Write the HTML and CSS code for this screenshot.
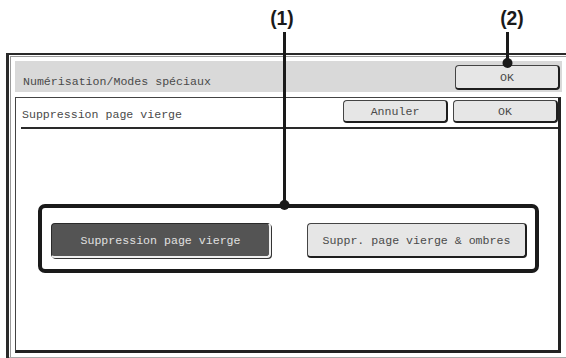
FILE: index.html
```html
<!DOCTYPE html>
<html lang="fr">
<head>
<meta charset="utf-8">
<link rel="stylesheet" href="styles.css">
</head>
<body>
<div class="page">
  <div class="annot">
    <span class="label label-1">(1)</span>
    <span class="label label-2">(2)</span>
  </div>
  <div class="window">
    <div class="header">
      <span class="title">Numérisation/Modes spéciaux</span>
      <button class="btn btn-header">OK</button>
    </div>
    <div class="panel">
      <div class="panel-head">
        <span class="title">Suppression page vierge</span>
        <div class="actions">
          <button class="btn btn-small">Annuler</button>
          <button class="btn btn-small">OK</button>
        </div>
      </div>
      <div class="group">
        <button class="btn btn-option active">Suppression page vierge</button>
        <button class="btn btn-option">Suppr. page vierge &amp; ombres</button>
      </div>
    </div>
  </div>
  <svg class="leaders" width="566" height="358" viewBox="0 0 566 358">
    <line x1="284.5" y1="32" x2="284.5" y2="205" stroke="#1a1a1a" stroke-width="3"/>
    <circle cx="284.5" cy="205" r="5" fill="#1a1a1a"/>
    <line x1="507.5" y1="32" x2="507.5" y2="63" stroke="#1a1a1a" stroke-width="3"/>
    <circle cx="507.5" cy="63" r="5" fill="#1a1a1a"/>
  </svg>
</div>
</body>
</html>
```

FILE: styles.css
```css
* { box-sizing: border-box; }
html, body { margin: 0; padding: 0; background: #fff; }
.page {
  position: relative;
  width: 566px;
  height: 358px;
  overflow: hidden;
  font-family: "Liberation Mono", "Courier New", monospace;
  color: #444;
}
.annot { position: relative; height: 53px; }
.label {
  position: absolute;
  top: 5px;
  font-family: "Liberation Sans", Arial, sans-serif;
  font-weight: bold;
  font-size: 21px;
  line-height: 25px;
  color: #1a1a1a;
  transform: translateX(-50%) scaleX(0.92);
}
.label-1 { left: 282px; }
.label-2 { left: 512px; }

.window {
  position: relative;
  margin-left: 6px;
  height: 305px;
  border-top: 2px solid #2a2a2a;
  border-left: 3px solid #2a2a2a;
  padding: 6px 4px 0 6px;
  display: flex;
  flex-direction: column;
}
.window::before {
  content: "";
  position: absolute;
  left: 1px; top: 1px; right: 0; bottom: 0;
  border-left: 1px solid #9a9a9a;
  border-top: 1px solid #9a9a9a;
  pointer-events: none;
}
.window::after {
  content: "";
  position: absolute;
  left: 0; right: 0; bottom: 0;
  border-bottom: 1px solid #aaa;
}
.header {
  height: 31px;
  background: #d9d9d9;
  display: flex;
  align-items: center;
  justify-content: space-between;
  padding-left: 8px;
  padding-right: 2px;
}
.title {
  font-size: 11.6px;
  color: #4a4a4a;
}
.header .title { margin-top: 9px; }
.btn {
  font-family: "Liberation Mono", "Courier New", monospace;
  font-size: 11.6px;
  color: #4a4a4a;
  background: #e6e6e6;
  border: 1px solid #444;
  border-right: 2px solid #1e1e1e;
  border-bottom: 2px solid #1e1e1e;
  border-radius: 4px;
  padding: 0;
  margin: 0;
  display: flex;
  align-items: center;
  justify-content: center;
}
.btn-header { width: 105px; height: 25px; margin-top: 2px; }

.panel {
  margin-top: 5px;
  margin-right: 1px;
  height: 256px;
  background: #fff;
  border-left: 1px solid #444;
  border-top: 1px solid #444;
  border-right: 3px solid #222;
  border-bottom: 3px solid #222;
  display: flex;
  flex-direction: column;
}
.panel-head {
  height: 31px;
  margin-left: 5px;
  padding-left: 1px;
  padding-top: 2px;
  border-bottom: 2px solid #2a2a2a;
  display: flex;
  justify-content: space-between;
  align-items: flex-start;
}
.panel-head .title { margin-top: 8px; }
.actions { display: flex; gap: 5px; }
.btn-small { width: 105px; height: 23px; }

.group {
  margin-top: 75px;
  margin-left: 22px;
  width: 501px;
  height: 69px;
  border: 4px solid #1a1a1a;
  border-radius: 7px;
  padding: 15px 8px 0 9px;
  display: flex;
  justify-content: space-between;
  align-items: flex-start;
}
.btn-option { width: 220px; height: 35px; }
.btn-option.active {
  background: #545454;
  color: #e0e0e0;
  border-color: #2a2a2a;
  border-right-color: #f0f0f0;
  border-bottom-color: #f0f0f0;
  box-shadow: 1px 1px 0 #333;
}
.leaders {
  position: absolute;
  left: 0; top: 0;
  pointer-events: none;
}
```
